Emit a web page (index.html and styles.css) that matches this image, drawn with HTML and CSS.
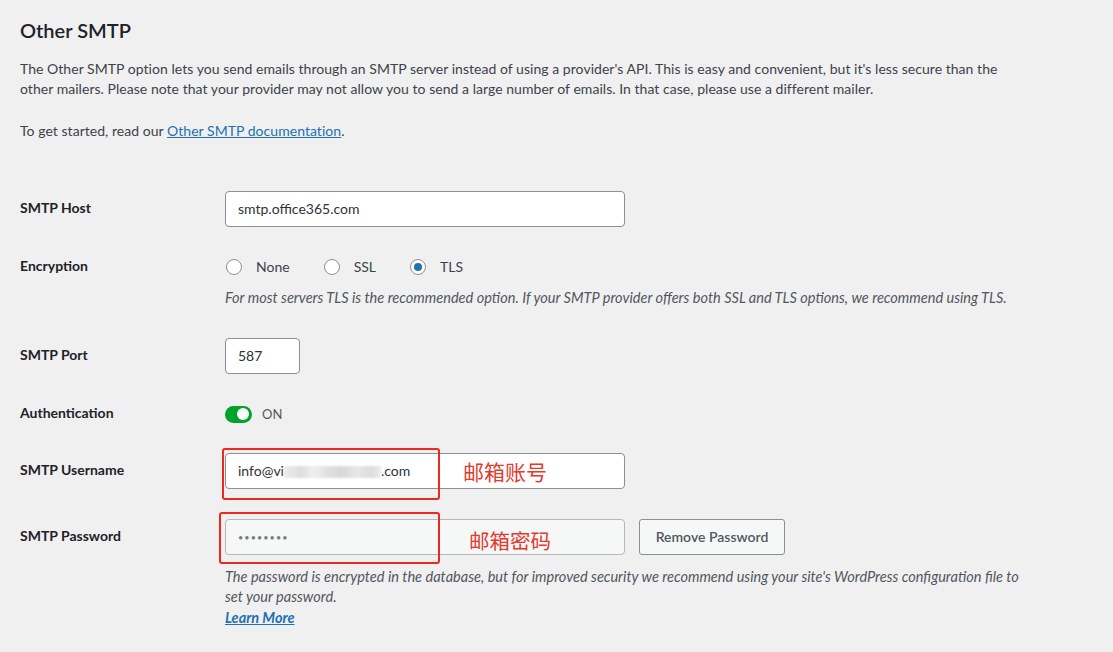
FILE: index.html
```html
<!DOCTYPE html>
<html lang="en">
<head>
<meta charset="utf-8">
<title>Other SMTP</title>
<link rel="stylesheet" href="styles.css">
</head>
<body>
<div class="page">
  <h2 class="title">Other SMTP</h2>
  <p class="intro">The Other SMTP option lets you send emails through an SMTP server instead of using a provider's API. This is easy and convenient, but it's less secure than the<br>other mailers. Please note that your provider may not allow you to send a large number of emails. In that case, please use a different mailer.</p>
  <p class="intro start">To get started, read our <a href="#" class="link">Other SMTP documentation</a>.</p>

  <div class="form">
    <div class="row row-host">
      <div class="label">SMTP Host</div>
      <div class="field">
        <div class="input wide">smtp.office365.com</div>
      </div>
    </div>

    <div class="row row-enc">
      <div class="label short">Encryption</div>
      <div class="field">
        <div class="radios">
          <span class="opt"><span class="radio"></span>None</span>
          <span class="opt"><span class="radio"></span>SSL</span>
          <span class="opt"><span class="radio checked"></span>TLS</span>
        </div>
        <p class="desc enc-desc">For most servers TLS is the recommended option. If your SMTP provider offers both SSL and TLS options, we recommend using TLS.</p>
      </div>
    </div>

    <div class="row row-port">
      <div class="label">SMTP Port</div>
      <div class="field">
        <div class="input narrow">587</div>
      </div>
    </div>

    <div class="row row-auth">
      <div class="label short">Authentication</div>
      <div class="field">
        <div class="toggle-line"><span class="toggle"><span class="knob"></span></span><span class="toggle-text">ON</span></div>
      </div>
    </div>

    <div class="row row-user">
      <div class="label">SMTP Username</div>
      <div class="field">
        <div class="annot-wrap">
          <div class="input wide">info@vi<span class="blur"></span>.com</div>
          <span class="redbox user-box"></span>
          <span class="note user-note">邮箱账号</span>
        </div>
      </div>
    </div>

    <div class="row row-pass">
      <div class="label">SMTP Password</div>
      <div class="field">
        <div class="pass-line">
          <div class="annot-wrap">
            <div class="input wide readonly"><span class="dots">••••••••</span></div>
            <span class="redbox pass-box"></span>
            <span class="note pass-note">邮箱密码</span>
          </div>
          <button class="btn" type="button">Remove Password</button>
        </div>
        <p class="desc pass-desc">The password is encrypted in the database, but for improved security we recommend using your site's WordPress configuration file to<br>set your password.</p>
        <a href="#" class="learn">Learn More</a>
      </div>
    </div>
  </div>
</div>
</body>
</html>
```

FILE: styles.css
```css
html, body {
  margin: 0;
  padding: 0;
  background: #f0f0f1;
}
body {
  font-family: Lato, "Noto Sans", sans-serif;
  font-size: 14px;
  color: #3c434a;
}
.page {
  padding: 16px 20px 0 20px;
  width: 1040px;
}
.title {
  margin: 0;
  font-size: 20px;
  line-height: 28px;
  font-weight: 600;
  color: #1d2327;
}
.intro {
  margin: 15px 0 0 0;
  line-height: 20px;
  font-size: 14px;
  letter-spacing: 0.04px;
}
.intro.start {
  margin-top: 22px;
}
.link {
  color: #2271b1;
  text-decoration: underline;
}
.form {
  margin-top: 50px;
}
.row {
  display: flex;
  align-items: flex-start;
}
.label {
  width: 205px;
  flex: none;
  line-height: 34px;
  font-weight: 700;
  font-size: 14px;
  color: #1d2327;
}
.label.short {
  line-height: 18px;
}
.field {
  flex: 1;
}
.row-enc { margin-top: 30px; }
.row-port { margin-top: 30px; }
.row-auth { margin-top: 30px; }
.row-user { margin-top: 29px; }
.row-pass { margin-top: 30px; }

.input {
  box-sizing: border-box;
  height: 36px;
  border: 1px solid #8c8f94;
  border-radius: 4px;
  background: #fff;
  padding: 0 12px;
  line-height: 33px;
  font-size: 14px;
  color: #2c3338;
}
.input.wide { width: 400px; }
.input.narrow { width: 75px; }
.input.readonly {
  background: #f6f7f7;
  border-color: #b4b7bb;
}
.dots {
  color: #787c82;
  font-size: 9px;
  letter-spacing: 1.1px;
  vertical-align: 1px;
}
.blur {
  display: inline-block;
  width: 97px;
  height: 12px;
  vertical-align: -2px;
  background: linear-gradient(90deg, #ececec 0, #dedede 18%, #efefef 30%, #e0e0e0 45%, #d8d8d8 60%, #e8e8e8 75%, #dcdcdc 90%, #eeeeee 100%);
  filter: blur(1px);
}

.radios {
  display: flex;
  height: 20px;
  align-items: center;
  padding-left: 1px;
}
.opt {
  display: inline-flex;
  align-items: center;
  margin-right: 34px;
  line-height: 20px;
  color: #3c434a;
}
.radio {
  box-sizing: border-box;
  width: 16px;
  height: 16px;
  border: 1px solid #8c8f94;
  border-radius: 50%;
  background: #fff;
  margin: 0 14px 0 0;
  position: relative;
}
.radio.checked::after {
  content: "";
  position: absolute;
  left: 3px;
  top: 3px;
  width: 8px;
  height: 8px;
  border-radius: 50%;
  background: #2271b1;
}
.desc {
  margin: 0;
  font-style: italic;
  font-size: 14.55px;
  line-height: 20px;
  color: #50575e;
}
.enc-desc { margin-top: 11px; }

.toggle-line {
  display: flex;
  align-items: center;
  height: 20px;
}
.toggle {
  box-sizing: border-box;
  width: 27px;
  height: 17px;
  border-radius: 9px;
  background: #00a32a;
  position: relative;
  margin-right: 10px;
}
.knob {
  position: absolute;
  right: 3px;
  top: 2.5px;
  width: 12px;
  height: 12px;
  border-radius: 50%;
  background: #fff;
}
.toggle-text {
  font-size: 13px;
  color: #50575e;
}

.annot-wrap {
  position: relative;
  width: 400px;
}
.redbox {
  position: absolute;
  box-sizing: border-box;
  border: 2px solid #e82a20;
  border-radius: 3px;
}
.user-box {
  left: -3px;
  top: -5px;
  width: 218px;
  height: 52px;
}
.pass-box {
  left: -6px;
  top: -7px;
  width: 221px;
  height: 52px;
}
.note {
  position: absolute;
  font-family: "Noto Sans CJK SC", sans-serif;
  font-size: 21px;
  line-height: 26px;
  color: #e23a2e;
}
.user-note {
  left: 238px;
  top: 5px;
}
.pass-note {
  left: 244px;
  top: 8px;
  font-size: 20.5px;
}
.pass-line {
  display: flex;
  align-items: flex-start;
}
.btn {
  box-sizing: border-box;
  margin-left: 14px;
  height: 36px;
  width: 146px;
  border: 1px solid #8c8f94;
  border-radius: 3px;
  background: #f6f7f7;
  font-family: Lato, "Noto Sans", sans-serif;
  font-size: 14px;
  font-weight: 600;
  color: #50575e;
  padding: 0 0 1px 0;
}
.pass-desc { margin-top: 12px; }
.learn {
  display: inline-block;
  font-style: italic;
  font-weight: 700;
  font-size: 14.5px;
  line-height: 20px;
  margin-top: 1px;
  color: #2271b1;
  text-decoration: underline;
}
```
